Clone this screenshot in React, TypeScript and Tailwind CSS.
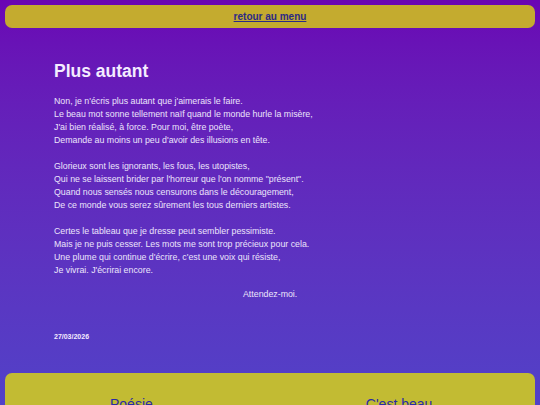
import React from "react";

const stanzas = [
  [
    "Non, je n'écris plus autant que j'aimerais le faire.",
    "Le beau mot sonne tellement naïf quand le monde hurle la misère,",
    "J'ai bien réalisé, à force. Pour moi, être poète,",
    "Demande au moins un peu d'avoir des illusions en tête.",
  ],
  [
    "Glorieux sont les ignorants, les fous, les utopistes,",
    "Qui ne se laissent brider par l'horreur que l'on nomme \"présent\".",
    "Quand nous sensés nous censurons dans le découragement,",
    "De ce monde vous serez sûrement les tous derniers artistes.",
  ],
  [
    "Certes le tableau que je dresse peut sembler pessimiste.",
    "Mais je ne puis cesser. Les mots me sont trop précieux pour cela.",
    "Une plume qui continue d'écrire, c'est une voix qui résiste,",
    "Je vivrai. J'écrirai encore.",
  ],
];

export default function App() {
  return (
    <div className="min-h-[405px] bg-gradient-to-b from-[#6a05b4] to-[#4f44c9] font-['Liberation_Sans',Arial,sans-serif] px-[5px] pt-[5px] overflow-hidden">
      <nav className="h-[23px] rounded-[7px] bg-[#c4ab2f] flex items-center justify-center">
        <a href="#" className="text-[10px] font-bold underline text-[#2c2a86]">
          retour au menu
        </a>
      </nav>

      <main className="pl-[49px] pt-[35px] pb-[31px]">
        <h1 className="text-[17.5px] font-bold text-[#f4ecff] leading-none">Plus autant</h1>
        <div className="mt-[14px] text-[8.8px] leading-[13px] text-[#ece4fb] flex flex-col gap-[13px]">
          {stanzas.map((s, i) => (
            <p key={i}>
              {s.map((l, j) => (
                <React.Fragment key={j}>
                  {l}
                  <br />
                </React.Fragment>
              ))}
            </p>
          ))}
        </div>
        <p className="mt-[11px] pl-[189px] text-[8.8px] leading-[13px] text-[#ece4fb]">Attendez-moi.</p>
        <p className="mt-[31px] text-[7px] font-bold text-[#f4ecff]">27/03/2026</p>
      </main>

      <footer className="rounded-[7px] bg-[#c2bb33] h-[60px] flex pt-[21px]">
        <span className="ml-[105px] text-[14px] text-[#2a2aa6]">Poésie</span>
        <span className="ml-[213px] text-[14px] text-[#2a2aa6]">C'est beau</span>
      </footer>
    </div>
  );
}
